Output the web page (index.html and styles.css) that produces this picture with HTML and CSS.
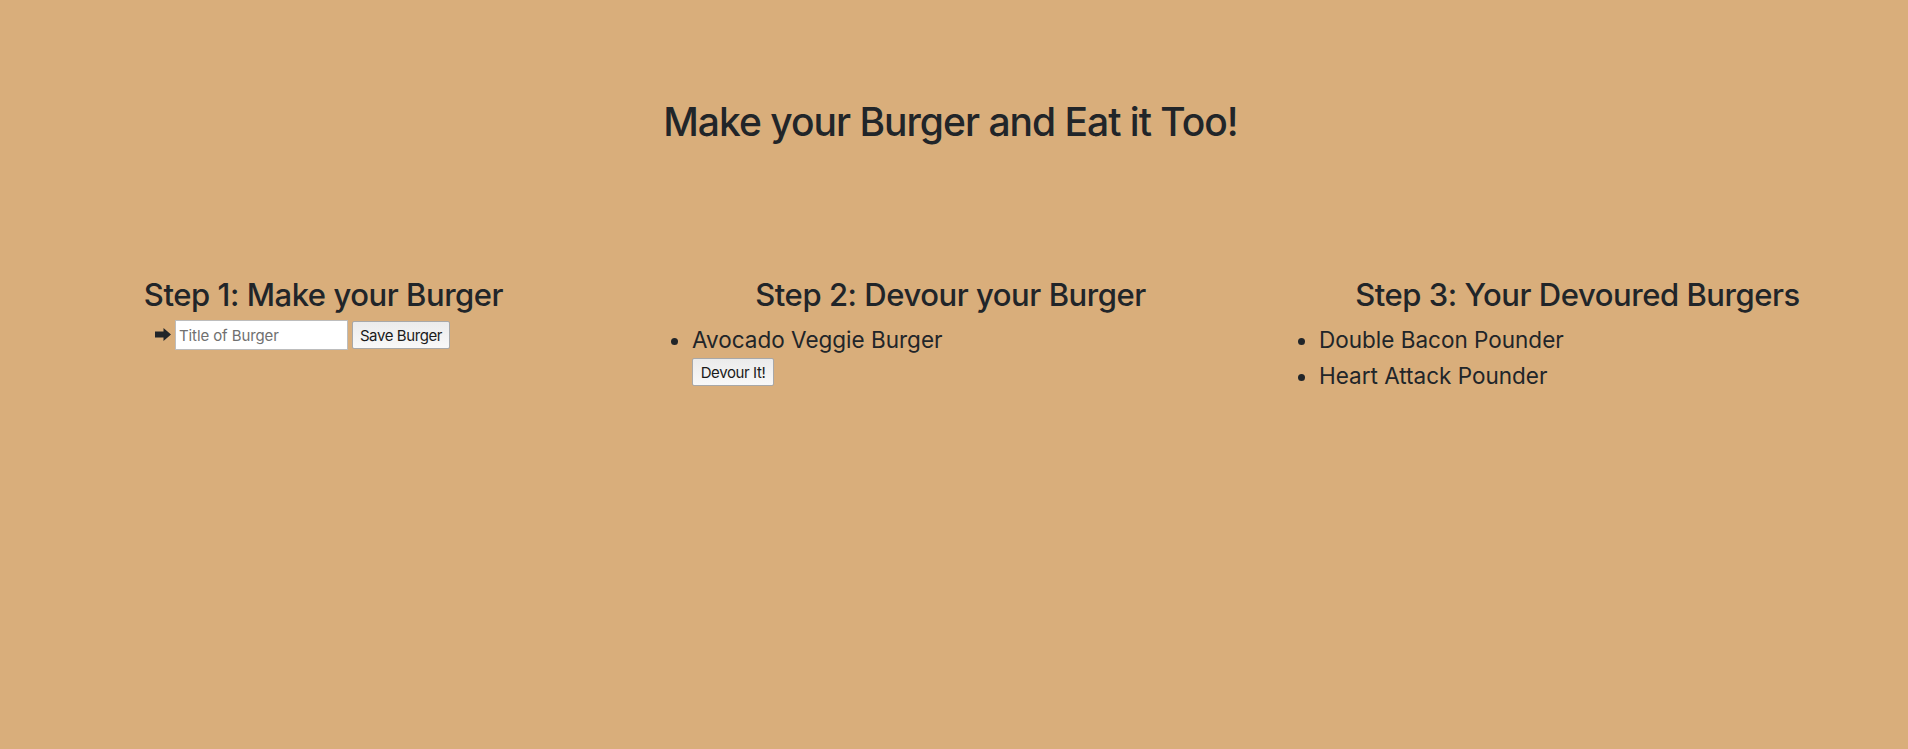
FILE: index.html
```html
<!DOCTYPE html>
<html lang="en">
<head>
<meta charset="utf-8">
<title>Eat-Da-Burger</title>
<link rel="stylesheet" href="styles.css">
</head>
<body>
  <div class="page">
    <header class="hero">
      <h1 class="title">Make your Burger and Eat it Too!</h1>
    </header>
    <main class="row">
      <section class="col">
        <h2 class="col-title">Step 1: Make your Burger</h2>
        <form class="burger-form">
          <svg class="arrow" viewBox="0 0 16 13" width="16" height="13" aria-hidden="true">
            <path d="M0 3.5 H8.5 V0 L16 6.5 L8.5 13 V9.5 H0 Z" fill="#212529"/>
          </svg>
          <input class="field" type="text" placeholder="Title of Burger">
          <button class="btn btn-save" type="button">Save Burger</button>
        </form>
      </section>
      <section class="col">
        <h2 class="col-title">Step 2: Devour your Burger</h2>
        <ul class="burger-list">
          <li>Avocado Veggie Burger
            <button class="btn btn-block" type="button">Devour It!</button>
          </li>
        </ul>
      </section>
      <section class="col">
        <h2 class="col-title">Step 3: Your Devoured Burgers</h2>
        <ul class="burger-list">
          <li>Double Bacon Pounder</li>
          <li>Heart Attack Pounder</li>
        </ul>
      </section>
    </main>
  </div>
</body>
</html>
```
FILE: styles.css
```css
html, body {
  margin: 0;
  padding: 0;
}

body {
  background: #d9ae7b;
  color: #212529;
  font-family: Inter, "Noto Sans", "Liberation Sans", sans-serif;
  height: 749px;
}

.page {
  width: 1881px;
  padding-left: 10px;
}

.hero {
  padding-top: 98px;
}

.title {
  margin: 0;
  font-size: 39px;
  line-height: 48px;
  font-weight: 500;
  text-align: center;
  letter-spacing: -1px;
}

.row {
  display: grid;
  grid-template-columns: repeat(3, 627px);
  margin-top: 130px;
}

.col {
  padding: 0 15px;
}

.col-title {
  margin: 0 0 6px;
  font-size: 31px;
  line-height: 38.4px;
  font-weight: 500;
  text-align: center;
  letter-spacing: -0.45px;
}

.burger-form {
  display: flex;
  align-items: center;
  gap: 4px;
  margin: 0 0 0 130px;
}

.arrow {
  display: block;
  flex: none;
  margin-top: -2px;
}

.field {
  box-sizing: border-box;
  width: 173px;
  height: 30px;
  margin: 0;
  padding: 0 3px;
  border: 1px solid #bdbdbd;
  background: #ffffff;
  font-family: Inter, "Noto Sans", sans-serif;
  font-size: 15px;
  letter-spacing: -0.1px;
  color: #212529;
  outline: none;
}

.field::placeholder {
  color: #707070;
}

.btn {
  box-sizing: border-box;
  height: 28px;
  margin: 0;
  padding: 0;
  border: 1px solid #a8a8a8;
  border-radius: 2px;
  background: linear-gradient(#ebebeb, #f8f8f8);
  font-family: Inter, "Noto Sans", sans-serif;
  font-size: 15px;
  letter-spacing: -0.4px;
  color: #1a1a1a;
}

.btn-save {
  width: 98px;
}

.btn-block {
  display: block;
  width: 82px;
}

.burger-list {
  margin: 0;
  padding: 2px 0 0 40px;
  font-size: 22.5px;
  line-height: 36px;
}
```
